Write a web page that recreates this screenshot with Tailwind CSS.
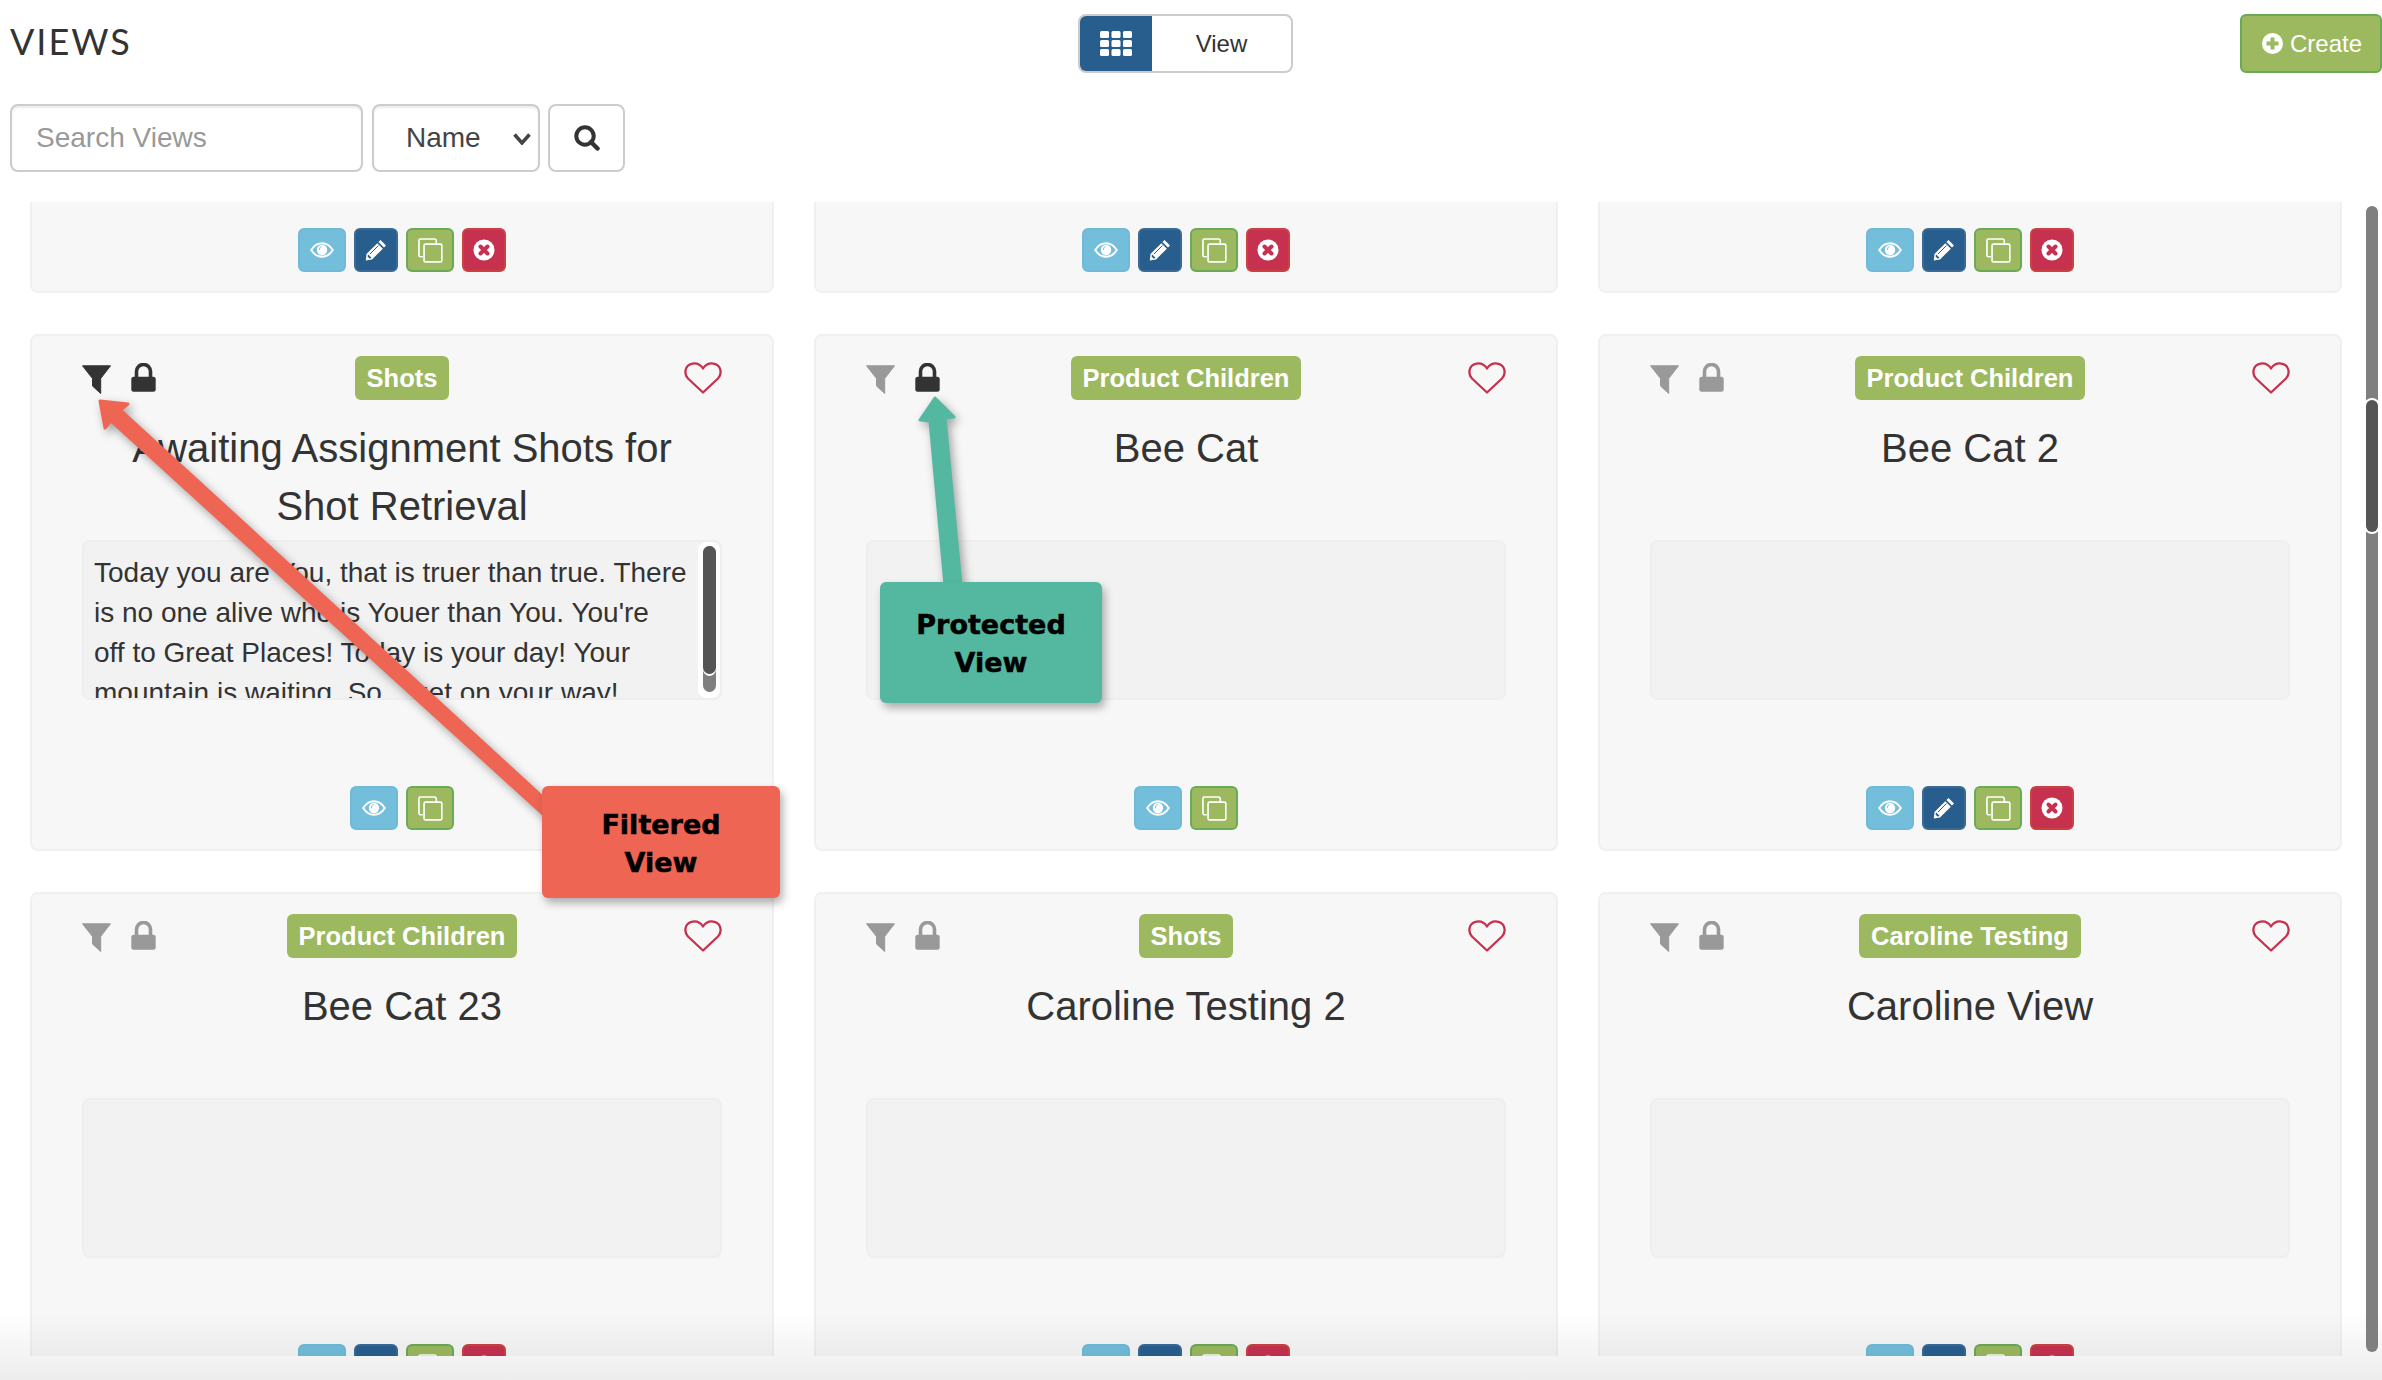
<!DOCTYPE html>
<html lang="en">
  <head>
    <meta charset="UTF-8" />
    <meta name="viewport" content="width=device-width, initial-scale=1.0" />
    <title>Views</title>
    <script src="https://cdn.jsdelivr.net/npm/@tailwindcss/browser@4"></script>
  </head>
  <body class="relative h-[1380px] w-[2382px] overflow-hidden bg-white text-[#333] font-['Liberation_Sans',Arial,sans-serif]">
    <!-- Shared icons -->
    <svg class="hidden">
      <symbol id="eye" viewBox="0 0 24 16">
        <path fill="none" stroke="white" stroke-width="2" d="M1.2 8C4 3.6 7.800 1.200 12 1.200S20 3.600 22.800 8C20 12.400 16.200 14.800 12 14.800S4 12.400 1.200 8Z" />
        <circle cx="12" cy="8" r="5.200" fill="white" />
        <path fill="#73bedb" d="M9 7.500A4 4 0 0 1 12.500 3.800C10.800 4.800 10 6 9.800 8.500Z" />
      </symbol>
      <symbol id="pencil" viewBox="0 0 22 22">
        <path fill="white" d="M15.500 1 L21 6.500 L19 8.500 L13.500 3Z" />
        <path fill="white" d="M12.300 4.200 L17.800 9.700 L7 20.500 L.8 21.500 L1.500 15Z" />
        <path fill="#285e8e" d="M3.200 15.500 L6.500 18.800 L6 19.300 L4.500 19.500 L2.700 17.700 L2.900 15.800Z" />
        <path stroke="#285e8e" stroke-width="1" d="M13.500 6.500 L5 15" />
      </symbol>
      <symbol id="copy" viewBox="0 0 26 26">
        <path fill="none" stroke="white" stroke-width="1.700" stroke-linejoin="round" d="M5 19.500H2.500Q1 19.500 1 18V2.500Q1 1 2.500 1H17Q19 1 19 3V6" />
        <rect x="6.300" y="6.300" width="18.500" height="18.500" rx="1.500" fill="none" stroke="white" stroke-width="1.700" />
      </symbol>
      <symbol id="cross" viewBox="0 0 22 22">
        <circle cx="11" cy="11" r="10.500" fill="white" />
        <path stroke="#c5314f" stroke-width="4" stroke-linecap="round" d="M7.500 7.500 14.500 14.500M14.500 7.500 7.500 14.500" />
      </symbol>
      <symbol id="funnel" viewBox="0 0 29 29">
        <path fill="currentColor" stroke="currentColor" stroke-linejoin="round" d="M.5.800H28.500L18.700 13.500V28.500L10.500 21V13.500Z" />
      </symbol>
      <symbol id="lock" viewBox="0 0 25 29">
        <path fill="none" stroke="currentColor" stroke-width="3.600" d="M5.500 15V8.500A7 7 0 0 1 19.500 8.500V15" />
        <rect x="0.300" y="13.800" width="24.400" height="15" rx="2.500" fill="currentColor" />
      </symbol>
      <symbol id="heart" viewBox="0 0 38 32">
        <path fill="none" stroke="#c5314f" stroke-width="2.300" stroke-linejoin="round" d="M19 30.500 4 16.500C-.5 11.500 1 3.500 7.500 1.800 12 .8 16.500 2.500 19 6.500 21.500 2.500 26 .8 30.500 1.800 37 3.500 38.500 11.500 34 16.500Z" />
      </symbol>
    </svg>

    <!-- Header -->
    <header class="grid grid-cols-[1078px_215px_1fr] items-start pt-[14px]">
      <h1 class="pl-[10px] pt-[7px] text-[36px] leading-[40px] tracking-[2px] font-['Lato',sans-serif]">VIEWS</h1>
      <div class="flex h-[59px] overflow-hidden rounded-lg border-2 border-[#ccc]">
        <button class="flex w-[72px] items-center justify-center bg-[#285e8e]">
          <svg class="h-[25px] w-[32px]" viewBox="0 0 32 25" fill="white">
            <rect width="9" height="7" rx="1.500" /><rect x="11.500" width="9" height="7" rx="1.500" /><rect x="23" width="9" height="7" rx="1.500" />
            <rect y="9" width="9" height="7" rx="1.500" /><rect x="11.500" y="9" width="9" height="7" rx="1.500" /><rect x="23" y="9" width="9" height="7" rx="1.500" />
            <rect y="18" width="9" height="7" rx="1.500" /><rect x="11.500" y="18" width="9" height="7" rx="1.500" /><rect x="23" y="18" width="9" height="7" rx="1.500" />
          </svg>
        </button>
        <button class="flex-1 text-center text-2xl">View</button>
      </div>
      <button class="flex h-[59px] w-[142px] items-center gap-[7px] justify-self-end rounded-md border-2 border-[#6aaa57] bg-[#9cb95f] pl-[20px] text-2xl text-white">
        <svg class="h-[21px] w-[21px]" viewBox="0 0 21 21">
          <circle cx="10.500" cy="10.500" r="10.500" fill="white" />
          <path stroke="#9cb95f" stroke-width="4" d="M10.500 4.500V16.500M4.500 10.500H16.500" />
        </svg>
        Create
      </button>
    </header>

    <!-- Search -->
    <form class="mt-[31px] flex gap-2 pl-[10px]">
      <input placeholder="Search Views" class="h-[68px] w-[353px] rounded-lg border-2 border-[#ccc] pl-[24px] text-[28px] shadow-[inset_0_2px_2px_rgba(0,0,0,0.08)] placeholder:text-[#999]" />
      <div class="relative ml-px">
        <select class="h-[68px] w-[168px] appearance-none rounded-lg border-2 border-[#ccc] bg-white pl-[32px] text-[28px] text-[#444] shadow-[inset_0_2px_2px_rgba(0,0,0,0.08)]">
          <option>Name</option>
        </select>
        <svg class="absolute left-[141px] top-[29px] h-[12px] w-[18px]" viewBox="0 0 18 12"><path fill="none" stroke="#444" stroke-width="3.500" d="M1.500 1.500 9 10 16.500 1.500" /></svg>
      </div>
      <button type="button" class="flex h-[68px] w-[77px] items-center justify-center rounded-lg border-2 border-[#ccc]">
        <svg class="h-[26px] w-[26px]" viewBox="0 0 26 26"><circle cx="11" cy="11" r="8.700" fill="none" stroke="#333" stroke-width="4" /><path stroke="#333" stroke-width="4.500" stroke-linecap="round" d="M17 17 23.500 23.500" /></svg>
      </button>
    </form>

    <!-- Card grid, scrolled part way down -->
    <main class="mt-[30px] h-[1154px] overflow-hidden pl-[30px]">
      <div class="-mt-[426px] grid w-[2312px] grid-cols-3 gap-x-[40px] gap-y-[41px]">
        <!-- Row scrolled out of view -->
        <div class="flex h-[517px] flex-col rounded-lg border-2 border-[#f0f0f0] bg-[#f7f7f7] px-[50px] pb-[19px]">
          <div class="mt-auto flex justify-center gap-2">
            <button class="flex h-[44px] w-[48px] items-center justify-center rounded-md border-2 border-[#6fb9d9] bg-[#73bedb]"><svg class="h-4 w-6"><use href="#eye" /></svg></button>
            <button class="flex h-[44px] w-[44px] items-center justify-center rounded-md border-2 border-[#3a6a98] bg-[#285e8e]"><svg class="h-[22px] w-[22px]"><use href="#pencil" /></svg></button>
            <button class="flex h-[44px] w-[48px] items-center justify-center rounded-md border-2 border-[#6aaa57] bg-[#9cb95f]"><svg class="h-[25px] w-[25px]"><use href="#copy" /></svg></button>
            <button class="flex h-[44px] w-[44px] items-center justify-center rounded-md border-2 border-[#c9423f] bg-[#c5314f]"><svg class="h-[22px] w-[22px]"><use href="#cross" /></svg></button>
          </div>
        </div>
        <div class="flex h-[517px] flex-col rounded-lg border-2 border-[#f0f0f0] bg-[#f7f7f7] px-[50px] pb-[19px]">
          <div class="mt-auto flex justify-center gap-2">
            <button class="flex h-[44px] w-[48px] items-center justify-center rounded-md border-2 border-[#6fb9d9] bg-[#73bedb]"><svg class="h-4 w-6"><use href="#eye" /></svg></button>
            <button class="flex h-[44px] w-[44px] items-center justify-center rounded-md border-2 border-[#3a6a98] bg-[#285e8e]"><svg class="h-[22px] w-[22px]"><use href="#pencil" /></svg></button>
            <button class="flex h-[44px] w-[48px] items-center justify-center rounded-md border-2 border-[#6aaa57] bg-[#9cb95f]"><svg class="h-[25px] w-[25px]"><use href="#copy" /></svg></button>
            <button class="flex h-[44px] w-[44px] items-center justify-center rounded-md border-2 border-[#c9423f] bg-[#c5314f]"><svg class="h-[22px] w-[22px]"><use href="#cross" /></svg></button>
          </div>
        </div>
        <div class="flex h-[517px] flex-col rounded-lg border-2 border-[#f0f0f0] bg-[#f7f7f7] px-[50px] pb-[19px]">
          <div class="mt-auto flex justify-center gap-2">
            <button class="flex h-[44px] w-[48px] items-center justify-center rounded-md border-2 border-[#6fb9d9] bg-[#73bedb]"><svg class="h-4 w-6"><use href="#eye" /></svg></button>
            <button class="flex h-[44px] w-[44px] items-center justify-center rounded-md border-2 border-[#3a6a98] bg-[#285e8e]"><svg class="h-[22px] w-[22px]"><use href="#pencil" /></svg></button>
            <button class="flex h-[44px] w-[48px] items-center justify-center rounded-md border-2 border-[#6aaa57] bg-[#9cb95f]"><svg class="h-[25px] w-[25px]"><use href="#copy" /></svg></button>
            <button class="flex h-[44px] w-[44px] items-center justify-center rounded-md border-2 border-[#c9423f] bg-[#c5314f]"><svg class="h-[22px] w-[22px]"><use href="#cross" /></svg></button>
          </div>
        </div>

        <!-- Awaiting Assignment -->
        <article class="flex h-[517px] flex-col rounded-lg border-2 border-[#f0f0f0] bg-[#f7f7f7] px-[50px] pb-[19px] pt-[20px]">
          <div class="grid grid-cols-[1fr_auto_1fr] items-start">
            <div class="flex items-start gap-[20px]">
              <svg class="mt-[9px] h-[29px] w-[29px] text-[#333]"><use href="#funnel" /></svg>
              <svg class="mt-[7px] h-[29px] w-[25px] text-[#333]"><use href="#lock" /></svg>
            </div>
            <span class="flex h-[44px] items-center rounded-md bg-[#9cb95f] px-[12px] text-[25.5px] font-bold text-white">Shots</span>
            <svg class="mt-[6px] h-[32px] w-[38px] justify-self-end"><use href="#heart" /></svg>
          </div>
          <h2 class="mt-[19px] h-[121px] px-[20px] text-center text-[40px] leading-[58px]">Awaiting Assignment Shots for Shot Retrieval</h2>
          <div class="relative h-[160px] overflow-hidden rounded-lg border-2 border-[#eee] bg-[#f2f2f2] py-[11px] pl-[10px] pr-[24px] text-[28px] leading-[40px]">
            <p>Today you are You, that is truer than true. There is no one alive who is Youer than You. You're<br />off to Great Places! Today is your day! Your<br />mountain is waiting. So... get on your way!</p>
            <div class="absolute right-0 top-0 h-full w-[22px] rounded-lg bg-white pl-[5px] pr-[4px] pt-[4px]">
              <div class="h-[146px] rounded-full bg-[#7f7f7f]">
                <div class="h-[128px] rounded-full bg-[#555] shadow-[0_2px_0_#fff]"></div>
              </div>
            </div>
          </div>
          <div class="mt-auto flex justify-center gap-2">
            <button class="flex h-[44px] w-[48px] items-center justify-center rounded-md border-2 border-[#6fb9d9] bg-[#73bedb]"><svg class="h-4 w-6"><use href="#eye" /></svg></button>
            <button class="flex h-[44px] w-[48px] items-center justify-center rounded-md border-2 border-[#6aaa57] bg-[#9cb95f]"><svg class="h-[25px] w-[25px]"><use href="#copy" /></svg></button>
          </div>
        </article>

        <!-- Bee Cat -->
        <article class="flex h-[517px] flex-col rounded-lg border-2 border-[#f0f0f0] bg-[#f7f7f7] px-[50px] pb-[19px] pt-[20px]">
          <div class="grid grid-cols-[1fr_auto_1fr] items-start">
            <div class="flex items-start gap-[20px]">
              <svg class="mt-[9px] h-[29px] w-[29px] text-[#999]"><use href="#funnel" /></svg>
              <svg class="mt-[7px] h-[29px] w-[25px] text-[#333]"><use href="#lock" /></svg>
            </div>
            <span class="flex h-[44px] items-center rounded-md bg-[#9cb95f] px-[12px] text-[25.5px] font-bold text-white">Product Children</span>
            <svg class="mt-[6px] h-[32px] w-[38px] justify-self-end"><use href="#heart" /></svg>
          </div>
          <h2 class="mt-[19px] h-[121px] text-center text-[40px] leading-[58px]">Bee Cat</h2>
          <div class="h-[160px] rounded-lg border-2 border-[#eee] bg-[#f2f2f2]"></div>
          <div class="mt-auto flex justify-center gap-2">
            <button class="flex h-[44px] w-[48px] items-center justify-center rounded-md border-2 border-[#6fb9d9] bg-[#73bedb]"><svg class="h-4 w-6"><use href="#eye" /></svg></button>
            <button class="flex h-[44px] w-[48px] items-center justify-center rounded-md border-2 border-[#6aaa57] bg-[#9cb95f]"><svg class="h-[25px] w-[25px]"><use href="#copy" /></svg></button>
          </div>
        </article>

        <!-- Bee Cat 2 -->
        <article class="flex h-[517px] flex-col rounded-lg border-2 border-[#f0f0f0] bg-[#f7f7f7] px-[50px] pb-[19px] pt-[20px]">
          <div class="grid grid-cols-[1fr_auto_1fr] items-start">
            <div class="flex items-start gap-[20px]">
              <svg class="mt-[9px] h-[29px] w-[29px] text-[#999]"><use href="#funnel" /></svg>
              <svg class="mt-[7px] h-[29px] w-[25px] text-[#999]"><use href="#lock" /></svg>
            </div>
            <span class="flex h-[44px] items-center rounded-md bg-[#9cb95f] px-[12px] text-[25.5px] font-bold text-white">Product Children</span>
            <svg class="mt-[6px] h-[32px] w-[38px] justify-self-end"><use href="#heart" /></svg>
          </div>
          <h2 class="mt-[19px] h-[121px] text-center text-[40px] leading-[58px]">Bee Cat 2</h2>
          <div class="h-[160px] rounded-lg border-2 border-[#eee] bg-[#f2f2f2]"></div>
          <div class="mt-auto flex justify-center gap-2">
            <button class="flex h-[44px] w-[48px] items-center justify-center rounded-md border-2 border-[#6fb9d9] bg-[#73bedb]"><svg class="h-4 w-6"><use href="#eye" /></svg></button>
            <button class="flex h-[44px] w-[44px] items-center justify-center rounded-md border-2 border-[#3a6a98] bg-[#285e8e]"><svg class="h-[22px] w-[22px]"><use href="#pencil" /></svg></button>
            <button class="flex h-[44px] w-[48px] items-center justify-center rounded-md border-2 border-[#6aaa57] bg-[#9cb95f]"><svg class="h-[25px] w-[25px]"><use href="#copy" /></svg></button>
            <button class="flex h-[44px] w-[44px] items-center justify-center rounded-md border-2 border-[#c9423f] bg-[#c5314f]"><svg class="h-[22px] w-[22px]"><use href="#cross" /></svg></button>
          </div>
        </article>

        <!-- Bee Cat 23 -->
        <article class="flex h-[517px] flex-col rounded-lg border-2 border-[#f0f0f0] bg-[#f7f7f7] px-[50px] pb-[19px] pt-[20px]">
          <div class="grid grid-cols-[1fr_auto_1fr] items-start">
            <div class="flex items-start gap-[20px]">
              <svg class="mt-[9px] h-[29px] w-[29px] text-[#999]"><use href="#funnel" /></svg>
              <svg class="mt-[7px] h-[29px] w-[25px] text-[#999]"><use href="#lock" /></svg>
            </div>
            <span class="flex h-[44px] items-center rounded-md bg-[#9cb95f] px-[12px] text-[25.5px] font-bold text-white">Product Children</span>
            <svg class="mt-[6px] h-[32px] w-[38px] justify-self-end"><use href="#heart" /></svg>
          </div>
          <h2 class="mt-[19px] h-[121px] text-center text-[40px] leading-[58px]">Bee Cat 23</h2>
          <div class="h-[160px] rounded-lg border-2 border-[#eee] bg-[#f2f2f2]"></div>
          <div class="mt-auto flex justify-center gap-2">
            <button class="flex h-[44px] w-[48px] items-center justify-center rounded-md border-2 border-[#6fb9d9] bg-[#73bedb]"><svg class="h-4 w-6"><use href="#eye" /></svg></button>
            <button class="flex h-[44px] w-[44px] items-center justify-center rounded-md border-2 border-[#3a6a98] bg-[#285e8e]"><svg class="h-[22px] w-[22px]"><use href="#pencil" /></svg></button>
            <button class="flex h-[44px] w-[48px] items-center justify-center rounded-md border-2 border-[#6aaa57] bg-[#9cb95f]"><svg class="h-[25px] w-[25px]"><use href="#copy" /></svg></button>
            <button class="flex h-[44px] w-[44px] items-center justify-center rounded-md border-2 border-[#c9423f] bg-[#c5314f]"><svg class="h-[22px] w-[22px]"><use href="#cross" /></svg></button>
          </div>
        </article>

        <!-- Caroline Testing 2 -->
        <article class="flex h-[517px] flex-col rounded-lg border-2 border-[#f0f0f0] bg-[#f7f7f7] px-[50px] pb-[19px] pt-[20px]">
          <div class="grid grid-cols-[1fr_auto_1fr] items-start">
            <div class="flex items-start gap-[20px]">
              <svg class="mt-[9px] h-[29px] w-[29px] text-[#999]"><use href="#funnel" /></svg>
              <svg class="mt-[7px] h-[29px] w-[25px] text-[#999]"><use href="#lock" /></svg>
            </div>
            <span class="flex h-[44px] items-center rounded-md bg-[#9cb95f] px-[12px] text-[25.5px] font-bold text-white">Shots</span>
            <svg class="mt-[6px] h-[32px] w-[38px] justify-self-end"><use href="#heart" /></svg>
          </div>
          <h2 class="mt-[19px] h-[121px] text-center text-[40px] leading-[58px]">Caroline Testing 2</h2>
          <div class="h-[160px] rounded-lg border-2 border-[#eee] bg-[#f2f2f2]"></div>
          <div class="mt-auto flex justify-center gap-2">
            <button class="flex h-[44px] w-[48px] items-center justify-center rounded-md border-2 border-[#6fb9d9] bg-[#73bedb]"><svg class="h-4 w-6"><use href="#eye" /></svg></button>
            <button class="flex h-[44px] w-[44px] items-center justify-center rounded-md border-2 border-[#3a6a98] bg-[#285e8e]"><svg class="h-[22px] w-[22px]"><use href="#pencil" /></svg></button>
            <button class="flex h-[44px] w-[48px] items-center justify-center rounded-md border-2 border-[#6aaa57] bg-[#9cb95f]"><svg class="h-[25px] w-[25px]"><use href="#copy" /></svg></button>
            <button class="flex h-[44px] w-[44px] items-center justify-center rounded-md border-2 border-[#c9423f] bg-[#c5314f]"><svg class="h-[22px] w-[22px]"><use href="#cross" /></svg></button>
          </div>
        </article>

        <!-- Caroline View -->
        <article class="flex h-[517px] flex-col rounded-lg border-2 border-[#f0f0f0] bg-[#f7f7f7] px-[50px] pb-[19px] pt-[20px]">
          <div class="grid grid-cols-[1fr_auto_1fr] items-start">
            <div class="flex items-start gap-[20px]">
              <svg class="mt-[9px] h-[29px] w-[29px] text-[#999]"><use href="#funnel" /></svg>
              <svg class="mt-[7px] h-[29px] w-[25px] text-[#999]"><use href="#lock" /></svg>
            </div>
            <span class="flex h-[44px] items-center rounded-md bg-[#9cb95f] px-[12px] text-[25.5px] font-bold text-white">Caroline Testing</span>
            <svg class="mt-[6px] h-[32px] w-[38px] justify-self-end"><use href="#heart" /></svg>
          </div>
          <h2 class="mt-[19px] h-[121px] text-center text-[40px] leading-[58px]">Caroline View</h2>
          <div class="h-[160px] rounded-lg border-2 border-[#eee] bg-[#f2f2f2]"></div>
          <div class="mt-auto flex justify-center gap-2">
            <button class="flex h-[44px] w-[48px] items-center justify-center rounded-md border-2 border-[#6fb9d9] bg-[#73bedb]"><svg class="h-4 w-6"><use href="#eye" /></svg></button>
            <button class="flex h-[44px] w-[44px] items-center justify-center rounded-md border-2 border-[#3a6a98] bg-[#285e8e]"><svg class="h-[22px] w-[22px]"><use href="#pencil" /></svg></button>
            <button class="flex h-[44px] w-[48px] items-center justify-center rounded-md border-2 border-[#6aaa57] bg-[#9cb95f]"><svg class="h-[25px] w-[25px]"><use href="#copy" /></svg></button>
            <button class="flex h-[44px] w-[44px] items-center justify-center rounded-md border-2 border-[#c9423f] bg-[#c5314f]"><svg class="h-[22px] w-[22px]"><use href="#cross" /></svg></button>
          </div>
        </article>
      </div>
    </main>

    <!-- Bottom fade -->
    <div class="pointer-events-none absolute inset-x-0 bottom-0 h-[70px] bg-gradient-to-b from-black/0 to-black/[0.07]"></div>

    <!-- Page scrollbar -->
    <div class="absolute left-[2366px] top-[206px] h-[1146px] w-[12px] rounded-full bg-[#7f7f7f]">
      <div class="absolute top-[194px] h-[132px] w-[12px] rounded-full bg-[#555] shadow-[0_0_0_2px_#fff]"></div>
    </div>

    <!-- Annotation arrows -->
    <svg class="pointer-events-none absolute left-0 top-0 h-[1380px] w-[2382px] drop-shadow-[3px_4px_5px_rgba(0,0,0,0.35)]" viewBox="0 0 2382 1380">
      <path fill="#ef6554" stroke="#ef6554" stroke-width="3" stroke-linejoin="round" d="M100 401 128 404 120.500 410 545 799 545 816 111 421 105 428Z" />
      <path fill="#54b8a1" stroke="#54b8a1" stroke-width="3" stroke-linejoin="round" d="M935 398 954 417 945 418 961 585 945 585 930 421 920 420Z" />
    </svg>

    <!-- Annotation labels -->
    <div class="absolute left-[542px] top-[786px] flex h-[112px] w-[238px] flex-col justify-center rounded-md bg-[#ef6554] pt-[3px] text-center text-[27px] font-bold leading-[38px] text-black shadow-[3px_5px_8px_rgba(0,0,0,0.3)] [-webkit-text-stroke:0.5px_black] font-['DejaVu_Sans',sans-serif]">
      <span>Filtered</span><span>View</span>
    </div>
    <div class="absolute left-[880px] top-[582px] flex h-[121px] w-[222px] flex-col justify-center rounded-md bg-[#54b8a1] pt-[3px] text-center text-[27px] font-bold leading-[38px] text-black shadow-[3px_5px_8px_rgba(0,0,0,0.3)] [-webkit-text-stroke:0.5px_black] font-['DejaVu_Sans',sans-serif]">
      <span>Protected</span><span>View</span>
    </div>
  </body>
</html>
